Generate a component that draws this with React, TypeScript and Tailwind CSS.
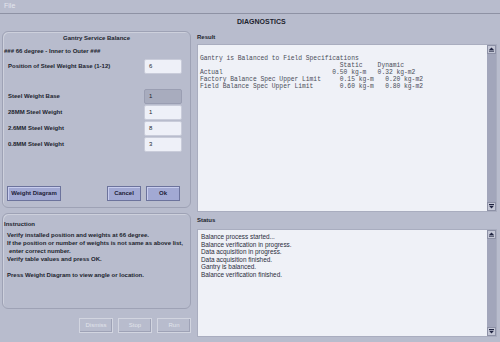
import React from "react";

const resultText = `Gantry is Balanced to Field Specifications
                                     Static    Dynamic
Actual                             0.50 kg-m   0.32 kg-m2
Factory Balance Spec Upper Limit     0.15 kg-m   0.20 kg-m2
Field Balance Spec Upper Limit       0.60 kg-m   0.80 kg-m2`;

const statusLines = [
  "Balance process started...",
  "Balance verification in progress.",
  "Data acquisition in progress.",
  "Data acquisition finished.",
  "Gantry is balanced.",
  "Balance verification finished.",
];

function Arrow({ up }: { up?: boolean }) {
  return (
    <div className="w-[9px] h-[9px] bg-[#c4c7d6] border border-[#8d91a6] flex items-center justify-center">
      <svg width="5" height="5" viewBox="0 0 5 5">
        {up ? (
          <>
            <polygon points="2.5,0.5 5,3 0,3" fill="#1e2340" />
            <rect x="0" y="3.6" width="5" height="1" fill="#1e2340" />
          </>
        ) : (
          <>
            <rect x="0" y="0" width="5" height="1" fill="#1e2340" />
            <polygon points="0,1.8 5,1.8 2.5,4.5" fill="#1e2340" />
          </>
        )}
      </svg>
    </div>
  );
}

function ScrollBar() {
  return (
    <div className="w-[9px] flex flex-col justify-between bg-[#a2a6bb]">
      <Arrow up />
      <Arrow />
    </div>
  );
}

function Field({ label, value, disabled }: { label: string; value: string; disabled?: boolean }) {
  return (
    <div className="flex items-center justify-between h-[15px]">
      <span className="pl-[5px] font-bold text-[#1c1f2e]">{label}</span>
      <div
        className={
          disabled
            ? "w-[38px] h-[15px] rounded-[2px] bg-[#a8acbe] border border-[#9a9eb2] flex items-center pl-[4px]"
            : "w-[38px] h-[15px] rounded-[2px] bg-[#eef0f8] border border-[#c9ccda] flex items-center pl-[4px]"
        }
      >
        {value}
      </div>
    </div>
  );
}

function Btn({ label, w }: { label: string; w: string }) {
  return (
    <div
      className={`${w} h-[15px] bg-[#a2a9d3] border border-[#6c739c] shadow-[inset_1px_1px_0_#c8cdee] flex items-center justify-center font-bold text-[#1c2036]`}
    >
      {label}
    </div>
  );
}

function DisabledBtn({ label }: { label: string }) {
  return (
    <div className="w-[34px] h-[15px] border border-[#d2d5e0] shadow-[inset_-1px_-1px_0_#9ea2b6] flex items-center justify-center text-[#e2e4ec]">
      {label}
    </div>
  );
}

export default function App() {
  return (
    <div
      className="w-[500px] h-[342px] bg-[#b8bccd] text-[6px] text-[#1c1f2e] overflow-hidden"
      style={{ fontFamily: '"Liberation Sans", Arial, sans-serif' }}
    >
      {/* Menu */}
      <div className="h-[14px] border-b border-[#8e92a4] flex items-center pl-[4px] text-[7px] text-[#e4e6ee]">
        File
      </div>

      <div className="flex">
        {/* Left column */}
        <div className="w-[195px] pl-[2px] pt-[17px]">
          <div className="w-[189px] h-[177px] rounded-[6px] border border-[#9ea2b5] shadow-[inset_1px_1px_0_#cdd0dc] flex flex-col">
            <div className="text-center font-bold pt-[2px] h-[12px]">Gantry Service Balance</div>
            <div className="font-bold pl-[1px] h-[14px] flex items-center">### 66 degree - Inner to Outer ###</div>
            <div className="pr-[8px] pt-[1px]">
              <Field label="Position of Steel Weight Base (1-12)" value="6" />
            </div>
            <div className="pr-[8px] pt-[15px] flex flex-col gap-[1px]">
              <Field label="Steel Weight Base" value="1" disabled />
              <Field label="28MM Steel Weight" value="1" />
              <Field label="2.6MM Steel Weight" value="8" />
              <Field label="0.8MM Steel Weight" value="3" />
            </div>
            <div className="flex items-center mt-[34px] pl-[4px] pr-[10px]">
              <Btn label="Weight Diagram" w="w-[54px]" />
              <div className="flex-1" />
              <Btn label="Cancel" w="w-[34px]" />
              <div className="w-[5px]" />
              <Btn label="Ok" w="w-[34px]" />
            </div>
          </div>

          <div className="w-[189px] h-[96px] mt-[5px] rounded-[6px] border border-[#9ea2b5] shadow-[inset_1px_1px_0_#cdd0dc] flex flex-col">
            <div className="font-bold pl-[1px] pt-[6px] h-[17px]">Instruction</div>
            <div className="font-bold leading-[8px] pl-[4px]">
              <div>Verify installed position and weights at 66 degree.</div>
              <div>If the position or number of weights is not same as above list,</div>
              <div className="pl-[2px]">enter correct number.</div>
              <div>Verify table values and press OK.</div>
              <div className="h-[8px]" />
              <div>Press Weight Diagram to view angle or location.</div>
            </div>
          </div>

          <div className="flex justify-end gap-[5px] mt-[9px] pr-[4px]">
            <DisabledBtn label="Dismiss" />
            <DisabledBtn label="Stop" />
            <DisabledBtn label="Run" />
          </div>
        </div>

        {/* Right column */}
        <div className="flex-1 pl-[2px] pr-[3px]">
          <div className="h-[17px] flex items-center justify-start pl-[40px] font-bold text-[7px]">DIAGNOSTICS</div>
          <div className="font-bold h-[13px] flex items-center">Result</div>
          <div className="flex h-[168px] border border-[#a9adbf]">
            <div className="flex-1 bg-[#eff1f7] pt-[10px] pl-[2px]">
              <pre
                className="text-[6.3px] leading-[7px] text-[#4a4d58]"
                style={{ fontFamily: '"Liberation Mono", "Courier New", monospace' }}
              >
                {resultText}
              </pre>
            </div>
            <ScrollBar />
          </div>
          <div className="font-bold h-[17px] flex items-center">Status</div>
          <div className="flex h-[108px] border border-[#a9adbf]">
            <div className="flex-1 bg-[#eff1f7] pt-[3px] pl-[3px] text-[6.4px] leading-[7.5px] text-[#2a2d3c]">
              {statusLines.map((l) => (
                <div key={l}>{l}</div>
              ))}
            </div>
            <ScrollBar />
          </div>
        </div>
      </div>
    </div>
  );
}
